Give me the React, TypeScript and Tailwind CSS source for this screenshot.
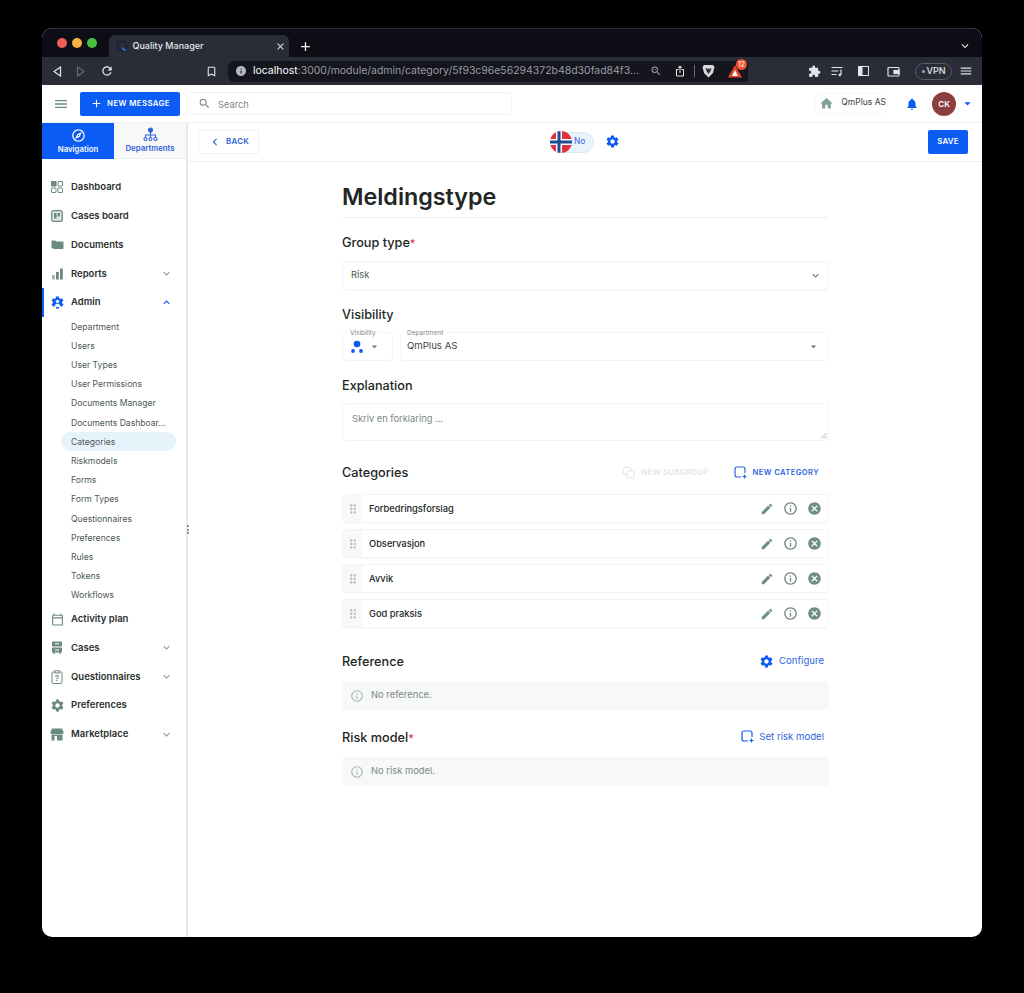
import React from "react";
import {
  MdAdd, MdArrowDropDown, MdCancel, MdChevronLeft, MdDragIndicator, MdEdit, MdExpandLess, MdExpandMore, MdExtension,
  MdHome, MdInfoOutline, MdNotifications, MdOutlineBookmarkBorder, MdOutlineCalendarToday, MdOutlineExplore, MdRefresh,
  MdSearch, MdSettings, MdClose, MdKeyboardArrowDown, MdIosShare, MdZoomOut, MdInfo, MdMenu,
} from "react-icons/md";

const font = "font-['Inter','Liberation_Sans',sans-serif]";
const green = "#6b8a80";
const gearPath = "M19.14 12.94c.04-.3.06-.61.06-.94 0-.32-.02-.64-.07-.94l2.03-1.58c.18-.14.23-.41.12-.61l-1.92-3.32c-.12-.22-.37-.29-.59-.22l-2.39.96c-.5-.38-1.03-.7-1.62-.94l-.36-2.54c-.04-.24-.24-.41-.48-.41h-3.84c-.24 0-.43.17-.47.41l-.36 2.54c-.59.24-1.13.57-1.62.94l-2.39-.96c-.22-.08-.47 0-.59.22L2.74 8.87c-.12.21-.08.47.12.61l2.03 1.58c-.05.3-.09.63-.09.94s.02.64.07.94l-2.03 1.58c-.18.14-.23.41-.12.61l1.92 3.32c.12.22.37.29.59.22l2.39-.96c.5.38 1.03.7 1.62.94l.36 2.54c.05.24.24.41.48.41h3.84c.24 0 .44-.17.47-.41l.36-2.54c.59-.24 1.13-.56 1.62-.94l2.39.96c.22.08.47 0 .59-.22l1.92-3.32c.12-.22.07-.47-.12-.61l-2.01-1.58z";

function DashIcon() {
  return (
    <svg width="12" height="12" viewBox="0 0 12 12" fill="none" stroke={green} strokeWidth="1">
      <rect x="0.500" y="0.500" width="4.500" height="4.500" fill={green} />
      <rect x="7" y="0.500" width="4.500" height="4.500" rx="0.500" />
      <rect x="0.500" y="7" width="4.500" height="4.500" rx="0.500" />
      <rect x="7" y="7" width="4.500" height="4.500" rx="0.500" />
    </svg>
  );
}
function BoardIcon() {
  return (
    <svg width="12" height="12" viewBox="0 0 12 12">
      <rect x="0.700" y="0.700" width="10.600" height="10.600" rx="2" fill="#dfe6e3" stroke={green} strokeWidth="1.300" />
      <rect x="3" y="3" width="2.500" height="5.500" fill={green} />
      <rect x="6.500" y="3" width="2.500" height="3.500" fill={green} />
    </svg>
  );
}
function FolderIcon() {
  return (
    <svg width="13" height="11" viewBox="0 0 13 11" fill={green}>
      <path d="M0.500 2.500c0-.6.400-1 1-1h2.800l1.200 1.200v6.800H1.500c-.6 0-1-.400-1-1z" />
      <path d="M3 2.500h8.500c.6 0 1 .400 1 1v5.500c0 .6-.400 1-1 1H3z" />
    </svg>
  );
}
function BarsIcon() {
  return (
    <svg width="11" height="12" viewBox="0 0 11 12" fill={green}>
      <rect x="0" y="7" width="2.800" height="4.500" fill="#9fb3ac" />
      <rect x="4" y="4" width="2.800" height="7.500" />
      <rect x="8" y="0.500" width="2.800" height="11" />
    </svg>
  );
}
function CasesIcon() {
  return (
    <svg width="12" height="13" viewBox="0 0 12 13" fill={green}>
      <rect x="1" y="0.500" width="10" height="5" rx="0.600" />
      <rect x="1" y="6.500" width="10" height="5" rx="0.600" />
      <rect x="4" y="2.300" width="4" height="1" fill="#fff" />
      <rect x="4" y="8.500" width="4" height="1" fill="#fff" />
      <rect x="2" y="11.500" width="2" height="1.300" />
      <rect x="8" y="11.500" width="2" height="1.300" />
    </svg>
  );
}
function StoreIcon() {
  return (
    <svg width="14" height="13" viewBox="0 0 14 13" fill={green}>
      <path d="M2 0.500h10l1.700 3.700c0 1.100-.8 1.800-1.700 1.800H2C1.100 6 .300 5.300.300 4.200z" />
      <path d="M1.500 6.500h11v6h-11zM4.500 8v4.500h2.500V8z" fillRule="evenodd" />
    </svg>
  );
}
function AdminIcon() {
  return (
    <svg width="15" height="15" viewBox="0 0 24 24">
      <path d={gearPath} fill="#0b5cf5" />
      <circle cx="12" cy="10" r="2.600" fill="#fff" />
      <path d="M7.500 17.500c.5-2.600 2.500-3.500 4.500-3.500s4 .9 4.500 3.500l-2 1.500h-5z" fill="#fff" />
    </svg>
  );
}
function QIcon() {
  return (
    <svg width="12" height="14" viewBox="0 0 12 14" fill="none" stroke={green} strokeWidth="1">
      <rect x="1" y="2" width="10" height="11.500" rx="0.800" />
      <rect x="3.800" y="0.700" width="4.400" height="2.300" fill="#fff" />
      <text x="6" y="11" fontSize="8" textAnchor="middle" fill={green} stroke="none">?</text>
    </svg>
  );
}
function TreeIcon() {
  return (
    <svg width="15" height="15" viewBox="0 0 15 15" fill="none" stroke="#2f62dd" strokeWidth="1.100">
      <circle cx="7.500" cy="3" r="2" fill="#2f62dd" />
      <path d="M7.500 5v3M2.500 10.500V8h10v2.500M7.500 8v2.500" />
      <circle cx="2.500" cy="12" r="1.500" fill="#fff" />
      <circle cx="7.500" cy="12" r="1.500" fill="#fff" />
      <circle cx="12.500" cy="12" r="1.500" fill="#fff" />
    </svg>
  );
}
function AddBox({ color }: { color: string }) {
  return (
    <svg width="13" height="13" viewBox="0 0 13 13" fill="none" stroke={color} strokeWidth="1.200">
      <path d="M7 11H3c-1.100 0-2-.9-2-2V3c0-1.100.9-2 2-2h6c1.100 0 2 .9 2 2v4" />
      <path d="M10.500 8.500v4M8.500 10.500h4" />
    </svg>
  );
}
function CopyIcon({ color }: { color: string }) {
  return (
    <svg width="13" height="13" viewBox="0 0 13 13" fill="none" stroke={color} strokeWidth="1.200">
      <circle cx="5" cy="5" r="4" />
      <rect x="5" y="5" width="7" height="7" rx="1.500" fill="#fff" />
    </svg>
  );
}
function Flag() {
  return (
    <svg width="22" height="22" viewBox="0 0 22 22" className="rounded-full">
      <rect width="22" height="22" fill="#e0323c" />
      <rect x="6" width="6" height="22" fill="#fff" />
      <rect y="8" width="22" height="6" fill="#fff" />
      <rect x="7.500" width="3" height="22" fill="#1f4a94" />
      <rect y="9.500" width="22" height="3" fill="#1f4a94" />
    </svg>
  );
}
function VisIcon() {
  return (
    <svg width="12" height="14" viewBox="0 0 12 14" fill="#0b5cf5">
      <circle cx="6" cy="4" r="3.300" />
      <circle cx="2" cy="11" r="1.900" />
      <circle cx="10" cy="11" r="1.900" />
    </svg>
  );
}
function Lion() {
  return (
    <svg width="13" height="14" viewBox="0 0 13 14">
      <path d="M2 1h9l1.500 2-1.500 6-4.500 4.500L2 9 .5 3z" fill="#d8d8dc" />
      <path d="M3.500 4l3 1 3-1-1 3-2 3-2-3z" fill="#2a2d36" />
    </svg>
  );
}
function AlertTri() {
  return (
    <div className="relative w-[20px] h-[14px]">
      <svg width="14" height="13" viewBox="0 0 14 13" className="absolute left-0 top-[1px]">
        <path d="M7 0l7 12.500H0z" fill="#e9412a" />
        <path d="M7 5l3 6H4z" fill="#fff" />
      </svg>
      <span className="absolute left-[8px] top-[-5px] w-[11px] h-[11px] rounded-full bg-[#f0502f] text-white text-[7px] leading-[11px] text-center">12</span>
    </div>
  );
}
function PlaylistIcon() {
  return (
    <svg width="13" height="11" viewBox="0 0 13 11" fill="none" stroke="#e4e5ea" strokeWidth="1.200">
      <path d="M0.500 1.500h11M0.500 5h7M0.500 8.500h5" />
      <path d="M10 3.500v5.500" />
      <circle cx="8.800" cy="9" r="1.200" fill="#e4e5ea" stroke="none" />
    </svg>
  );
}
function PanelIcon() {
  return (
    <svg width="11" height="10" viewBox="0 0 11 10">
      <rect x="0.500" y="0.500" width="10" height="9" fill="none" stroke="#e4e5ea" />
      <rect x="0.500" y="0.500" width="4" height="9" fill="#e4e5ea" />
    </svg>
  );
}

const mains: [string, React.ReactNode, boolean][] = [
  ["Dashboard", <DashIcon />, false],
  ["Cases board", <BoardIcon />, false],
  ["Documents", <FolderIcon />, false],
  ["Reports", <BarsIcon />, true],
];
const subs = ["Department", "Users", "User Types", "User Permissions", "Documents Manager", "Documents Dashboar...", "Categories", "Riskmodels", "Forms", "Form Types", "Questionnaires", "Preferences", "Rules", "Tokens", "Workflows"];
const mains2: [string, React.ReactNode, boolean][] = [
  ["Activity plan", <MdOutlineCalendarToday size={13} color={green} />, false],
  ["Cases", <CasesIcon />, true],
  ["Questionnaires", <QIcon />, true],
  ["Preferences", <MdSettings size={15} color={green} />, false],
  ["Marketplace", <StoreIcon />, true],
];

function MainItem({ label, icon, chev }: { label: string; icon: React.ReactNode; chev: boolean }) {
  return (
    <div className="h-[28.8px] flex items-center pl-[5px] pr-[13px] text-[#2b2f2e] text-[9.500px] font-semibold">
      <span className="w-[20px] flex justify-center items-center">{icon}</span>
      <span className="ml-[4px] flex-1">{label}</span>
      {chev && <MdExpandMore size={13} color="#8a9a95" />}
    </div>
  );
}
function Label({ children, star }: { children: React.ReactNode; star?: boolean }) {
  return (
    <span className="text-[12.700px] font-medium text-[#222624]">
      {children}
      {star && <span className="text-[#e0323c] text-[11px]">*</span>}
    </span>
  );
}
function Row({ name }: { name: string }) {
  return (
    <div className="h-[29px] flex items-stretch rounded border border-[#f3f4f4] shadow-[0_1px_1px_rgba(0,0,0,0.02)]">
      <div className="w-[19px] bg-[#f7f8f8] flex items-center justify-center shrink-0">
        <MdDragIndicator size={14} color="#b6bfbc" />
      </div>
      <div className="flex-1 pl-[7px] flex items-center text-[9.300px] font-medium text-[#222624]">{name}</div>
      <div className="flex items-center gap-[9px] pr-[6px]">
        <MdEdit size={14} color="#6f8f85" />
        <MdInfoOutline size={15} color="#6f7f7a" />
        <MdCancel size={15} color="#6f8f85" />
      </div>
    </div>
  );
}
function Empty({ text }: { text: string }) {
  return (
    <div className="mt-[11px] h-[29px] bg-[#f7f8f8] rounded flex items-center pl-[8px] gap-[7px] text-[9.400px] text-[#7d8885]">
      <MdInfoOutline size={14} color="#b0b8b5" />
      {text}
    </div>
  );
}

export default function App() {
  return (
    <div className={`${font} w-[1024px] h-[993px] bg-black pt-[28px] px-[42px] overflow-hidden`}>
      <div className="w-[940px] h-[909px] rounded-[10px] overflow-hidden bg-white flex flex-col">
        {/* tab strip */}
        <div className="h-[29px] bg-[#0d0e15] flex items-end pl-[15px] pr-[10px] shrink-0 border-t border-[#2c2d33]">
          <div className="flex items-center gap-[5.500px] h-[28px]">
            <span className="w-[9.500px] h-[9.500px] rounded-full bg-[#ed5f58]" />
            <span className="w-[9.500px] h-[9.500px] rounded-full bg-[#f3b33c]" />
            <span className="w-[9.500px] h-[9.500px] rounded-full bg-[#45c13e]" />
          </div>
          <div className="ml-[12px] w-[180px] h-[22px] bg-[#2a2d38] rounded-t-[6px] flex items-center pl-[7px] pr-[3px]">
            <svg width="12" height="12" viewBox="0 0 12 12" fill="none">
              <circle cx="6" cy="6" r="4.500" stroke="#1c2233" strokeWidth="2" />
              <path d="M6 8l3.500 2.500" stroke="#2d6bf0" strokeWidth="2" />
            </svg>
            <span className="ml-[5px] flex-1 text-[9px] font-medium text-[#e4e5ea]">Quality Manager</span>
            <MdClose size={11} color="#e4e5ea" />
          </div>
          <MdAdd size={15} color="#fff" className="ml-[9px] mb-[3.500px]" />
          <span className="flex-1" />
          <MdKeyboardArrowDown size={14} color="#e4e5ea" className="mb-[4px]" />
        </div>
        {/* toolbar */}
        <div className="h-[28px] bg-[#2a2d38] flex items-center shrink-0">
          <div className="w-[186px] pl-[11px] flex items-center gap-[14px]">
            <svg width="9" height="11" viewBox="0 0 9 11" fill="none" stroke="#e4e5ea" strokeWidth="1.200"><path d="M7.500 1v9L1 5.500z" /></svg>
            <svg width="9" height="11" viewBox="0 0 9 11" fill="none" stroke="#666a75" strokeWidth="1.200"><path d="M1.500 1v9L8 5.500z" /></svg>
            <MdRefresh size={14} color="#e4e5ea" className="ml-[1px]" />
          </div>
          <MdOutlineBookmarkBorder size={13} color="#e4e5ea" className="-ml-[23px]" />
          <div className="ml-[10px] w-[520px] h-[21px] bg-[#14151d] rounded-l-[6px] rounded-r-[3px] flex items-center pl-[7px] text-[10.460px]">
            <MdInfo size={12} color="#b5b7bd" />
            <span className="ml-[6px] whitespace-nowrap text-white font-normal">localhost<span className="text-[#9a9ca4]">:3000/module/admin/category/5f93c96e56294372b48d30fad84f3...</span></span>
            <span className="flex-1" />
            <MdZoomOut size={12} color="#9a9ca4" />
            <MdIosShare size={12} color="#e4e5ea" className="ml-[12px]" />
            <span className="ml-[8px] w-px h-[12px] bg-[#666a75]" />
            <span className="ml-[7px]"><Lion /></span>
            <span className="ml-[13px]"><AlertTri /></span>
          </div>
          <MdExtension size={13} color="#e4e5ea" className="ml-[60px]" />
          <span className="ml-[10px]"><PlaylistIcon /></span>
          <span className="ml-[14px]"><PanelIcon /></span>
          <svg width="13" height="11" viewBox="0 0 13 11" fill="none" stroke="#e4e5ea" strokeWidth="1.200" className="ml-[18px]"><rect x="1" y="1.500" width="11" height="8.500" rx="1" /><rect x="7" y="4.500" width="5" height="3" fill="#e4e5ea" /></svg>
          <span className="ml-[15px] h-[17px] w-[37px] rounded-full border border-[#5a5d68] text-[9px] text-[#e4e5ea] flex items-center justify-center gap-[2px] font-medium"><span className="w-[3px] h-[3px] rounded-full bg-[#a0a2aa]" />VPN</span>
          <MdMenu size={14} color="#e4e5ea" className="ml-[7px]" />
        </div>
        {/* app header */}
        <div className="h-[38px] flex items-center border-b border-[#eef0f0] shrink-0">
          <MdMenu size={16} color={green} className="ml-[11px]" />
          <button className="ml-[11px] w-[100px] h-[24px] rounded-[2px] bg-[#0b5cf5] text-white text-[7.800px] font-semibold flex items-center justify-center gap-[4px] tracking-[0.4px]">
            <MdAdd size={13} />NEW MESSAGE
          </button>
          <div className="ml-[7px] w-[325px] h-[23px] rounded-[3px] border border-[#f1f2f2] flex items-center pl-[10px] gap-[7px] text-[9.300px] text-[#7d8885]">
            <MdSearch size={13} color="#7d8885" /><span className="pt-[2px]">Search</span>
          </div>
          <span className="flex-1" />
          <div className="h-[21px] flex items-center rounded-[8px] pl-[4px] pr-[1px] border border-[#f5f6f6] text-[8.500px] text-[#3c4341]">
            <MdHome size={15} color="#83a097" /><span className="ml-[7px] pb-[2px]">QmPlus AS</span>
          </div>
          <MdNotifications size={14} color="#0b5cf5" className="ml-[17px]" />
          <span className="ml-[13px] w-[24px] h-[24px] rounded-full bg-[#8c3f40] text-white text-[8px] font-semibold flex items-center justify-center">CK</span>
          <MdArrowDropDown size={15} color="#0b5cf5" className="ml-[4px] mr-[7px]" />
        </div>
        {/* body */}
        <div className="flex-1 flex min-h-0">
          <aside className="w-[146px] shrink-0 border-r-2 border-[#e6e9e9] relative">
            <div className="flex h-[36px]">
              <div className="w-[72px] bg-[#0b5cf5] text-white flex flex-col items-center justify-center text-[7.800px] font-semibold pt-[1px]">
                <MdOutlineExplore size={15} />
                <span className="mt-[1px]">Navigation</span>
              </div>
              <div className="w-[72px] bg-[#f7f8f8] text-[#2f62dd] flex flex-col items-center justify-center text-[7.800px] font-semibold border-b border-[#eef0f0] pt-[1px]">
                <TreeIcon />
                <span className="mt-[1px]">Departments</span>
              </div>
            </div>
            <div className="pt-[14px]">
              {mains.map(([l, i, c]) => <MainItem key={l} label={l} icon={i} chev={c} />)}
              <div className="relative">
                <span className="absolute left-0 top-0 w-[2px] h-full bg-[#0b5cf5]" />
                <div className="h-[28.8px] flex items-center pl-[5px] pr-[13px] text-[#2b2f2e] text-[9.500px] font-semibold">
                  <span className="w-[20px] flex justify-center"><AdminIcon /></span>
                  <span className="ml-[4px] flex-1">Admin</span>
                  <MdExpandLess size={13} color="#0b5cf5" />
                </div>
              </div>
              {subs.map((s) => (
                <div key={s} className={`h-[19.200px] pt-[1px] flex items-center ml-[19px] mr-[10px] pl-[10px] rounded-full text-[8.600px] text-[#4d5855] ${s === "Categories" ? "bg-[#e6f3fb]" : ""}`}>{s}</div>
              ))}
              {mains2.map(([l, i, c]) => <MainItem key={l} label={l} icon={i} chev={c} />)}
            </div>
            <div className="absolute right-[-3px] top-[402px] flex flex-col gap-[1.500px]">
              <span className="w-[2px] h-[2px] bg-[#6b7572] rounded-full" />
              <span className="w-[2px] h-[2px] bg-[#6b7572] rounded-full" />
              <span className="w-[2px] h-[2px] bg-[#6b7572] rounded-full" />
            </div>
          </aside>
          <main className="flex-1 min-w-0">
            <div className="h-[39px] border-b border-[#eef0f0] flex items-center pl-[10px] pr-[14px] relative">
              <button className="w-[61px] h-[24px] border border-[#f0f1f1] rounded-[2px] flex items-center justify-center gap-[4px] text-[7.800px] font-semibold text-[#2f62dd] tracking-[0.3px]">
                <MdChevronLeft size={14} />BACK
              </button>
              <div className="absolute left-[362px] top-[7.500px] flex items-center">
                <div className="relative w-[44px] h-[22px]">
                  <div className="absolute left-[2px] top-[1px] w-[42px] h-[21px] rounded-full bg-[#e9f3fb] border border-[#dbe9f5] text-[8.300px] text-[#2f62dd] pl-[21px] pb-[2px] flex items-center">No</div>
                  <div className="absolute left-0 top-0"><Flag /></div>
                </div>
                <MdSettings size={15} color="#0b5cf5" className="ml-[11px]" />
              </div>
              <span className="flex-1" />
              <button className="w-[40px] h-[24px] rounded-[2px] bg-[#0b5cf5] text-white text-[7.800px] font-semibold tracking-[0.3px]">SAVE</button>
            </div>
            <div className="w-[487px] ml-[154px]">
              <div className="h-[56px] pt-[16px] flex items-center border-b border-[#eef0f0] text-[23.300px] font-semibold text-[#222624]">Meldingstype</div>
              <div className="h-[43px] pt-[14px] leading-[18px]"><Label star>Group type</Label></div>
              <div className="h-[29px] rounded border border-[#f3f4f4] shadow-[0_1px_1px_rgba(0,0,0,0.02)] flex items-center pl-[8px] pr-[6px] text-[9.300px] text-[#4d5855]">
                <span className="flex-1 pb-[2px]">Risk</span>
                <MdExpandMore size={13} color="#6b7572" />
              </div>
              <div className="h-[42px] flex items-center pt-[8px]"><Label>Visibility</Label></div>
              <div className="flex gap-[7px] h-[29px]">
                <div className="w-[51px] border border-[#f3f4f4] rounded relative flex items-center pl-[8px] shrink-0">
                  <span className="absolute left-[4px] -top-[4px] bg-white px-[3px] text-[6.500px] leading-[8px] text-[#7d8885]">Visibility</span>
                  <VisIcon />
                  <MdArrowDropDown size={13} color="#6b7572" className="ml-[5px]" />
                </div>
                <div className="flex-1 border border-[#f3f4f4] rounded relative flex items-center pl-[6px] pr-[8px] text-[9.600px] text-[#3c4341] pb-[1px]">
                  <span className="absolute left-[3px] -top-[4px] bg-white px-[3px] text-[6.500px] leading-[8px] text-[#7d8885]">Department</span>
                  <span className="flex-1">QmPlus AS</span>
                  <MdArrowDropDown size={13} color="#6b7572" />
                </div>
              </div>
              <div className="h-[42px] flex items-center pt-[8px]"><Label>Explanation</Label></div>
              <div className="h-[38px] rounded border border-[#f3f4f4] pl-[9px] pt-[9px] text-[9.300px] leading-[12px] text-[#7d8885] relative">
                Skriv en forklaring ...
                <svg width="7" height="7" viewBox="0 0 7 7" className="absolute right-[1px] bottom-[1px]" stroke="#8a8a8a" strokeWidth="0.700"><path d="M1 6.500L6.500 1M4 6.500L6.500 4" /></svg>
              </div>
              <div className="h-[53px] flex items-center pt-[7px]">
                <span className="flex-1"><Label>Categories</Label></span>
                <span className="pt-[3px] flex items-center gap-[6px] text-[7.600px] font-semibold tracking-[0.4px] text-[#e3e6e6]">
                  <CopyIcon color="#e3e6e6" />NEW SUBGROUP
                </span>
                <span className="pt-[3px] ml-[25px] mr-[10px] flex items-center gap-[6px] text-[7.600px] font-semibold tracking-[0.4px] text-[#2f62dd]">
                  <AddBox color="#2f62dd" />NEW CATEGORY
                </span>
              </div>
              <div className="flex flex-col gap-[6px]">
                <Row name="Forbedringsforslag" />
                <Row name="Observasjon" />
                <Row name="Avvik" />
                <Row name="God praksis" />
              </div>
              <div className="mt-[22px] h-[20px] flex items-center">
                <span className="flex-1"><Label>Reference</Label></span>
                <span className="pt-[2px] mr-[5px] flex items-center gap-[5px] text-[9.600px] text-[#2f62dd]"><MdSettings size={15} color="#0b5cf5" />Configure</span>
              </div>
              <Empty text="No reference." />
              <div className="mt-[16px] h-[20px] flex items-center">
                <span className="flex-1"><Label star>Risk model</Label></span>
                <span className="pt-[2px] mr-[5px] flex items-center gap-[5px] text-[9.600px] text-[#2f62dd]"><AddBox color="#0b5cf5" />Set risk model</span>
              </div>
              <Empty text="No risk model." />
            </div>
          </main>
        </div>
      </div>
    </div>
  );
}
